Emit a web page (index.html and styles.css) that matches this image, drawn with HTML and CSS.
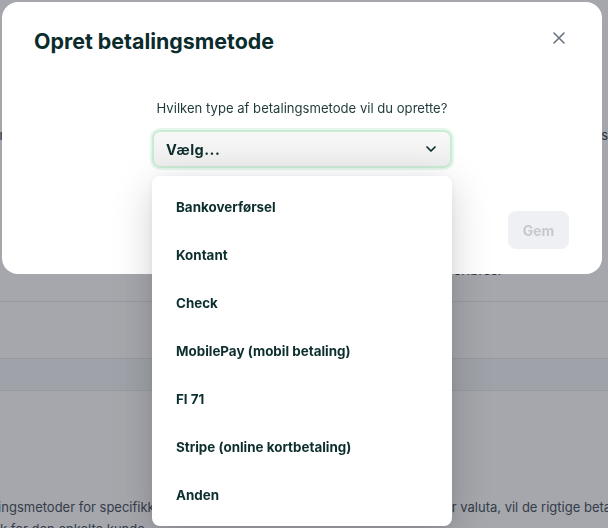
FILE: index.html
```html
<!DOCTYPE html>
<html lang="da">
<head>
<meta charset="utf-8">
<title>Opret betalingsmetode</title>
<link rel="stylesheet" href="styles.css">
</head>
<body>
<div class="page">
  <div class="page-row row-top"><span>Du kan tilføje betalingsmetoder, der vises på fakturaer og kvitteringer for kunder</span><span>s</span></div>
  <div class="page-row row-note"><span class="note">Standardmetoden er bankoverførsel</span></div>
  <div class="page-row row-line"></div>
  <div class="page-row row-line band"></div>
  <div class="page-spacer"></div>
  <div class="page-text">Du kan oprette betalingsmetoder for specifikke kunder. Hvis en kunde taler et andet sprog eller valuta, vil de rigtige betalingsmetoder</div>
  <div class="page-text">blive valgt automatisk for den enkelte kunde</div>
</div>
<div class="overlay"></div>
<div class="modal">
  <div class="modal-head">
    <h2 class="modal-title">Opret betalingsmetode</h2>
    <button class="close" aria-label="Luk">
      <svg width="12" height="12" viewBox="0 0 12 12"><path d="M1 1L11 11M11 1L1 11" stroke="#6b7280" stroke-width="1.6" stroke-linecap="round"/></svg>
    </button>
  </div>
  <div class="modal-body">
    <label class="question">Hvilken type af betalingsmetode vil du oprette?</label>
    <div class="select-wrap">
      <div class="select">
        <span>Vælg...</span>
        <svg width="10" height="6" viewBox="0 0 10 6"><path d="M1 1L5 5L9 1" fill="none" stroke="#0d2e2e" stroke-width="1.7" stroke-linecap="round" stroke-linejoin="round"/></svg>
      </div>
      <ul class="menu">
        <li>Bankoverførsel</li>
        <li>Kontant</li>
        <li>Check</li>
        <li>MobilePay (mobil betaling)</li>
        <li>FI 71</li>
        <li>Stripe (online kortbetaling)</li>
        <li>Anden</li>
      </ul>
    </div>
  </div>
  <div class="modal-foot">
    <button class="save" disabled>Gem</button>
  </div>
</div>
</body>
</html>
```
FILE: styles.css
```css
* { box-sizing: border-box; }
html, body { margin: 0; padding: 0; }
body {
  width: 608px;
  height: 528px;
  overflow: hidden;
  font-family: Inter, "Noto Sans", sans-serif;
  color: #0d2e2e;
  background: #ffffff;
  position: relative;
}
.page {
  display: flex;
  flex-direction: column;
  padding-top: 127px;
  font-size: 13px;
  color: #3a4450;
  height: 528px;
  overflow: hidden;
}
.page > * { flex-shrink: 0; }
.page-row { display: flex; }
.row-top {
  justify-content: space-between;
  height: 24px;
  margin-left: -420px;
}
.row-note {
  height: 150px;
  padding-top: 111px;
  justify-content: flex-end;
  padding-right: 107px;
  white-space: nowrap;
}
.row-line {
  height: 57px;
  border-top: 1px solid #e9eaec;
}
.row-line.band {
  height: 32px;
  background: #f6f7f8;
}
.page-spacer { height: 106px; border-top: 1px solid #e9eaec; }
.page-text {
  white-space: nowrap;
  margin-left: -126px;
  line-height: 22px;
  color: #4b5563;
}
.overlay {
  position: fixed;
  inset: 0;
  background: rgba(18, 24, 36, 0.38);
}
.modal {
  position: fixed;
  left: 2px;
  top: 2px;
  width: 600px;
  height: 272px;
  background: #ffffff;
  border-radius: 16px;
  display: flex;
  flex-direction: column;
}
.modal-head {
  display: flex;
  justify-content: space-between;
  align-items: flex-start;
  padding: 26px 37px 0 32px;
}
.modal-title {
  margin: 0;
  font-size: 21.4px;
  font-weight: 700;
  color: #0b2b2c;
  line-height: 26px;
}
.close {
  border: 0;
  background: none;
  padding: 0;
  margin-top: 4px;
  width: 12px;
  height: 12px;
  display: flex;
}
.modal-body {
  display: flex;
  flex-direction: column;
  align-items: center;
  padding-top: 44px;
}
.question {
  font-size: 13.1px;
  color: #1f3a3a;
  line-height: 20px;
  margin-bottom: 12px;
}
.select-wrap {
  position: relative;
  width: 300px;
}
.select {
  height: 38px;
  border: 2px solid #c9ecd5;
  border-radius: 8px;
  box-shadow: 0 0 0 2px rgba(201, 236, 213, 0.45);
  background: linear-gradient(#f8f8f8, #eeeeee);
  display: flex;
  align-items: center;
  justify-content: space-between;
  padding: 0 14px 0 12px;
  font-size: 14.5px;
  font-weight: 700;
  letter-spacing: 0.5px;
  color: #0d2e2e;
}
.menu {
  position: absolute;
  left: 0;
  top: 46px;
  width: 300px;
  margin: 0;
  padding: 7px 0;
  list-style: none;
  background: #ffffff;
  border-radius: 8px;
  box-shadow: 0 10px 40px rgba(0, 0, 0, 0.18), 0 2px 8px rgba(0, 0, 0, 0.06);
  z-index: 2;
}
.menu li {
  height: 48px;
  display: flex;
  align-items: center;
  padding-left: 24px;
  font-size: 13.4px;
  font-weight: 700;
  color: #0d2e2e;
}
.modal-foot {
  display: flex;
  justify-content: flex-end;
  padding: 0 33px 0 0;
  margin-top: auto;
  margin-bottom: 25px;
}
.save {
  width: 61px;
  height: 38px;
  border: 0;
  border-radius: 8px;
  background: #eef0f3;
  color: #c6cad0;
  font-family: inherit;
  font-size: 14px;
  font-weight: 700;
}
```
